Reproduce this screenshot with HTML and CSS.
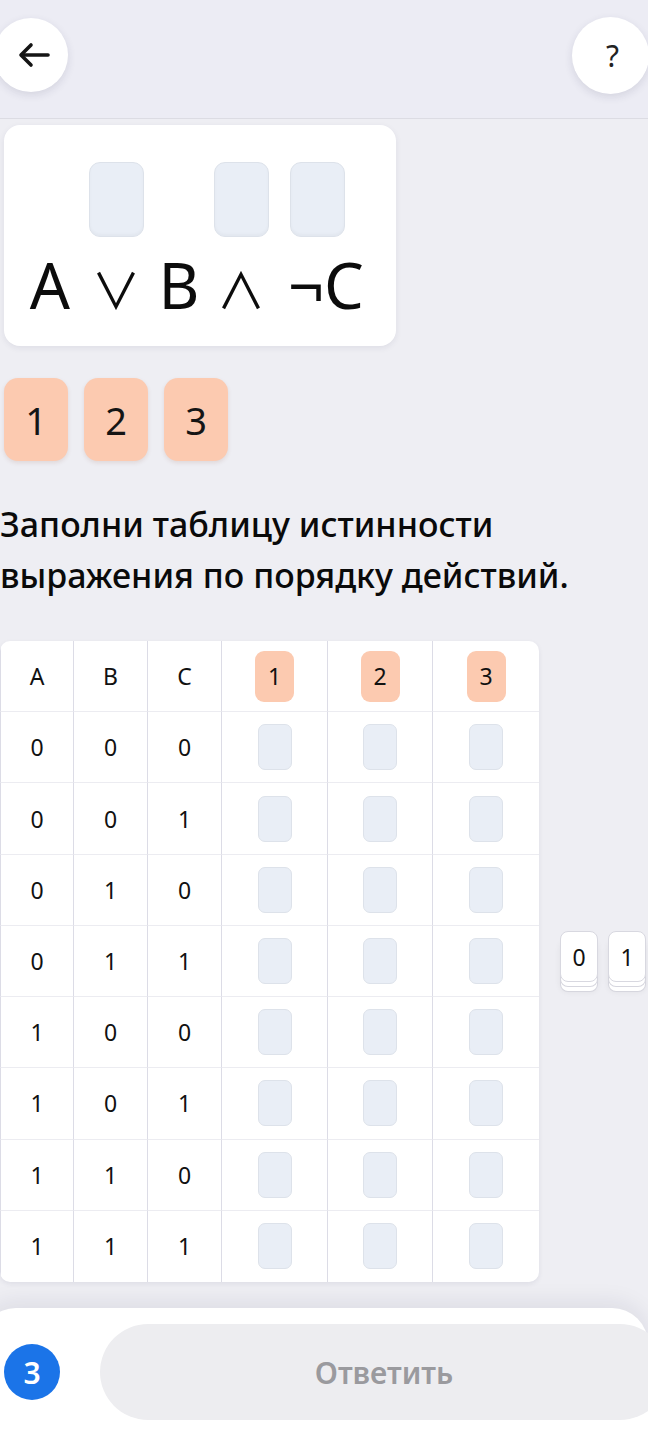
FILE: index.html
```html
<!DOCTYPE html>
<html lang="ru">

<head>
    <meta charset="UTF-8">
    <meta name="viewport" content="width=device-width, initial-scale=1.0">
    <title>Таблица истинности</title>
    <link rel="stylesheet" href="styles.css">
</head>

<body>
    <div class="app">
        <header class="topbar">
            <button class="round-btn back-btn" aria-label="Назад">
                <svg width="32" height="26" viewBox="0 0 32 26" fill="none" stroke="#151515" stroke-width="3.6"
                    stroke-linecap="round" stroke-linejoin="round">
                    <path d="M30 13H4" />
                    <path d="M13 3L3 13l10 10" />
                </svg>
            </button>
            <button class="round-btn help-btn" aria-label="Помощь">?</button>
        </header>

        <main class="content">
            <!-- выражение со слотами над операциями -->
            <section class="expr-card">
                <div class="expr">
                    <div class="term t-a"><span class="slot hidden"></span><span class="sym">A</span></div>
                    <div class="term t-or"><span class="slot"></span><span class="sym op">∨</span></div>
                    <div class="term t-b"><span class="slot hidden"></span><span class="sym">B</span></div>
                    <div class="term t-and"><span class="slot"></span><span class="sym op">∧</span></div>
                    <div class="term t-not"><span class="slot"></span><span class="sym">¬C</span></div>
                </div>
            </section>

            <div class="order-chips">
                <div class="chip">1</div>
                <div class="chip">2</div>
                <div class="chip">3</div>
            </div>

            <h1 class="task">Заполни таблицу истинности выражения по порядку действий.</h1>

            <div class="workspace">
                <div class="truth-table">
                    <div class="cell">A</div>
                    <div class="cell">B</div>
                    <div class="cell">C</div>
                    <div class="cell"><span class="mini-chip">1</span></div>
                    <div class="cell"><span class="mini-chip">2</span></div>
                    <div class="cell"><span class="mini-chip">3</span></div>

                    <div class="cell">0</div><div class="cell">0</div><div class="cell">0</div>
                    <div class="cell"><span class="drop"></span></div><div class="cell"><span class="drop"></span></div><div class="cell"><span class="drop"></span></div>

                    <div class="cell">0</div><div class="cell">0</div><div class="cell">1</div>
                    <div class="cell"><span class="drop"></span></div><div class="cell"><span class="drop"></span></div><div class="cell"><span class="drop"></span></div>

                    <div class="cell">0</div><div class="cell">1</div><div class="cell">0</div>
                    <div class="cell"><span class="drop"></span></div><div class="cell"><span class="drop"></span></div><div class="cell"><span class="drop"></span></div>

                    <div class="cell">0</div><div class="cell">1</div><div class="cell">1</div>
                    <div class="cell"><span class="drop"></span></div><div class="cell"><span class="drop"></span></div><div class="cell"><span class="drop"></span></div>

                    <div class="cell">1</div><div class="cell">0</div><div class="cell">0</div>
                    <div class="cell"><span class="drop"></span></div><div class="cell"><span class="drop"></span></div><div class="cell"><span class="drop"></span></div>

                    <div class="cell">1</div><div class="cell">0</div><div class="cell">1</div>
                    <div class="cell"><span class="drop"></span></div><div class="cell"><span class="drop"></span></div><div class="cell"><span class="drop"></span></div>

                    <div class="cell">1</div><div class="cell">1</div><div class="cell">0</div>
                    <div class="cell"><span class="drop"></span></div><div class="cell"><span class="drop"></span></div><div class="cell"><span class="drop"></span></div>

                    <div class="cell">1</div><div class="cell">1</div><div class="cell">1</div>
                    <div class="cell"><span class="drop"></span></div><div class="cell"><span class="drop"></span></div><div class="cell"><span class="drop"></span></div>
                </div>

                <div class="bank">
                    <div class="tile">0</div>
                    <div class="tile">1</div>
                </div>
            </div>
        </main>

        <footer class="bottom-bar">
            <div class="counter">3</div>
            <button class="answer-btn" disabled>Ответить</button>
        </footer>
    </div>
</body>

</html>
```

FILE: styles.css
```css
* {
    box-sizing: border-box;
}

body {
    margin: 0;
    padding: 0;
    background-color: #eeeef3;
    font-family: "Noto Sans", "Open Sans", sans-serif;
    color: #111;
    overflow: hidden;
}

.app {
    width: 648px;
    height: 1450px;
    overflow: hidden;
    display: flex;
    flex-direction: column;
}

/* верхняя панель */
.topbar {
    height: 119px;
    flex-shrink: 0;
    display: flex;
    align-items: center;
    justify-content: space-between;
    padding-bottom: 8px;
    background-color: #ececf4;
    border-bottom: 1px solid #dcdce3;
}

.round-btn {
    border: none;
    border-radius: 50%;
    background-color: #fff;
    display: flex;
    align-items: center;
    justify-content: center;
    padding: 0;
    box-shadow: 0 3px 8px rgba(40, 40, 80, 0.12);
}

.back-btn {
    width: 74px;
    height: 74px;
    margin-left: -6px;
    padding-left: 6px;
}

.help-btn {
    width: 77px;
    height: 77px;
    margin-right: -1px;
    font-family: "Noto Sans", sans-serif;
    font-size: 30px;
    color: #222;
    padding-left: 4px;
}

.content {
    padding-left: 4px;
}

/* карточка с выражением */
.expr-card {
    width: 392px;
    height: 221px;
    margin-top: 6px;
    background-color: #fff;
    border-radius: 16px;
    box-shadow: 0 2px 6px rgba(40, 40, 80, 0.08);
    padding-top: 37px;
    padding-left: 18px;
}

.expr {
    display: flex;
}

.term {
    display: flex;
    flex-direction: column;
    align-items: center;
}

.t-a { width: 56px; }
.t-or { width: 76px; }
.t-b { width: 50px; }
.t-and { width: 74px; }
.t-not { width: 96px; }

.t-not .slot {
    margin-right: 18px;
}

.slot {
    width: 55px;
    height: 75px;
    border-radius: 11px;
    background-color: #e9eef6;
    border: 1px solid #dde2ea;
    box-shadow: inset 0 -2px 3px rgba(0, 0, 0, 0.03);
}

.slot.hidden {
    visibility: hidden;
}

.sym {
    margin-top: 16px;
    font-size: 63px;
    line-height: 63px;
    color: #0c0c0c;
    white-space: nowrap;
}

.sym.op {
    font-family: "Noto Sans CJK JP", "DejaVu Sans", sans-serif;
    font-size: 49px;
    font-weight: 400;
    padding-top: 3px;
}

/* номера действий */
.order-chips {
    display: flex;
    gap: 16px;
    margin-top: 32px;
}

.chip {
    width: 64px;
    height: 83px;
    border-radius: 14px;
    background-color: #fccab0;
    box-shadow: 0 2px 4px rgba(120, 60, 30, 0.12);
    display: flex;
    align-items: center;
    justify-content: center;
    font-size: 38px;
    color: #151515;
}

.task {
    margin: 38px 20px 0 -4px;
    font-size: 34px;
    line-height: 51px;
    font-weight: 500;
    color: #0a0a0a;
}

/* таблица + плитки 0/1 */
.workspace {
    display: flex;
    align-items: center;
    margin-top: 40px;
    margin-left: -4px;
}

.truth-table {
    width: 539px;
    height: 641px;
    flex-shrink: 0;
    display: grid;
    grid-template-columns: 74px 74px 74px 106px 105px 106px;
    grid-template-rows: repeat(9, 1fr);
    background-color: #fff;
    border-radius: 10px;
    overflow: hidden;
    box-shadow: 0 2px 5px rgba(40, 40, 80, 0.08);
}

.cell {
    display: flex;
    align-items: center;
    justify-content: center;
    font-size: 23px;
    color: #111;
    border-right: 1px solid #dcdce6;
    border-bottom: 1px solid #ececf1;
}

.cell:nth-child(1),
.cell:nth-child(6n+1) {
    border-left: 1px solid #dcdce6;
}

.cell:nth-child(6n) {
    border-right: none;
}

.cell:nth-last-child(-n+6) {
    border-bottom: none;
}

.mini-chip {
    width: 39px;
    height: 51px;
    border-radius: 9px;
    background-color: #fccab0;
    display: flex;
    align-items: center;
    justify-content: center;
    font-size: 23px;
}

.drop {
    width: 34px;
    height: 46px;
    border-radius: 7px;
    background-color: #e9eef6;
    border: 1px solid #dde2ea;
}

.bank {
    display: flex;
    gap: 10px;
    margin-left: 21px;
    margin-top: -10px;
}

.tile {
    width: 38px;
    height: 51px;
    border-radius: 8px;
    background-color: #fff;
    border: 1px solid #d8d8e0;
    display: flex;
    align-items: center;
    justify-content: center;
    font-size: 23px;
    color: #111;
    box-shadow:
        0 5px 0 -1px #fff,
        0 5px 0 0 #d6d6de,
        0 10px 0 -1px #fff,
        0 10px 0 0 #d6d6de,
        0 10px 6px rgba(0, 0, 0, 0.06);
}

/* нижняя панель */
.bottom-bar {
    margin-top: 26px;
    margin-left: -20px;
    flex: 1;
    background-color: #fff;
    border-radius: 36px 36px 0 0;
    box-shadow: 0 -6px 22px rgba(30, 30, 60, 0.08);
    display: flex;
    align-items: flex-start;
    padding: 16px 0 0 24px;
}

.counter {
    width: 56px;
    height: 56px;
    flex-shrink: 0;
    margin-top: 20px;
    border-radius: 50%;
    background-color: #1b74e8;
    color: #fff;
    display: flex;
    align-items: center;
    justify-content: center;
    font-size: 30px;
    font-weight: 600;
}

.answer-btn {
    width: 568px;
    height: 96px;
    margin-left: 40px;
    flex-shrink: 0;
    border: none;
    border-radius: 48px;
    background-color: #ededf0;
    font-family: "Noto Sans", sans-serif;
    font-size: 30px;
    font-weight: 600;
    color: #9a9a9e;
}
```
